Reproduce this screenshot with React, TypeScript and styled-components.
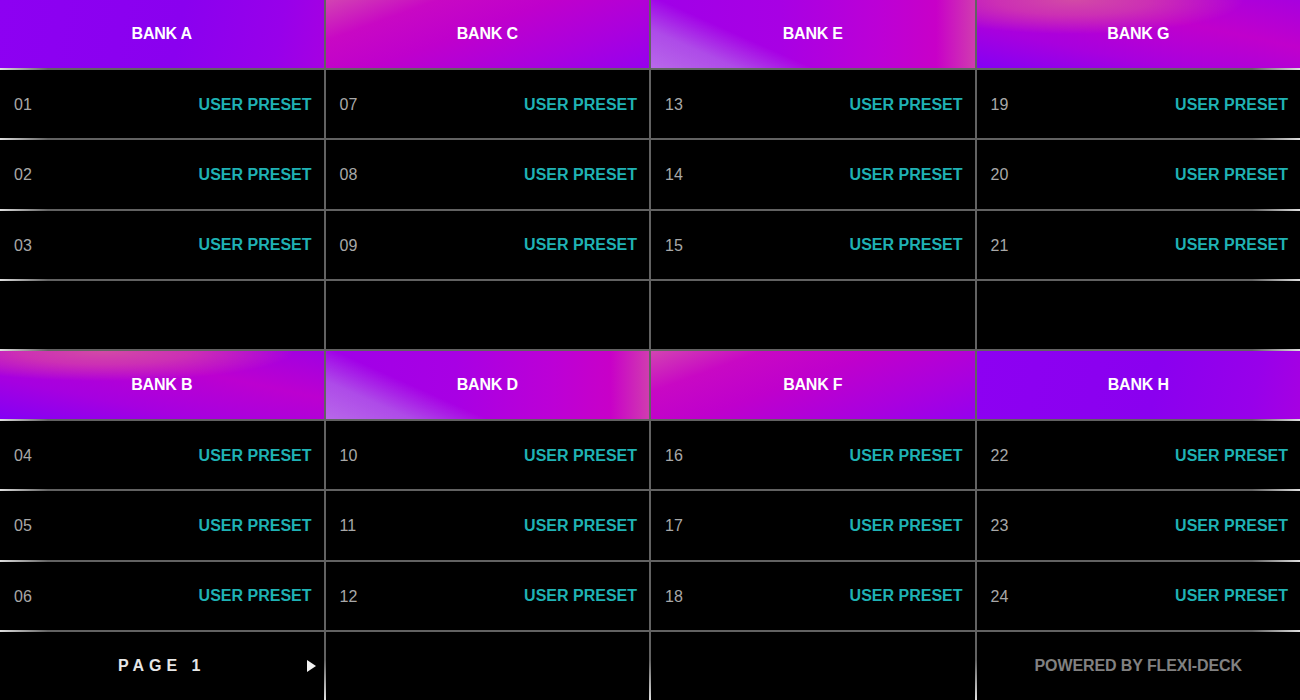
import React from "react";
import styled, { createGlobalStyle } from "styled-components";

const Global = createGlobalStyle`
  html, body { margin: 0; padding: 0; background: #000; }
  body { font-family: "Liberation Sans", Arial, sans-serif; }
  #root { width: 1300px; height: 700px; overflow: hidden; }
`;

type Tone = "violet" | "magenta" | "lavender" | "glow" | "glowLeft";

const tones: Record<Tone, string> = {
  violet:
    "linear-gradient(100deg, #8d00f2 0%, #8a00ef 55%, #9800ea 85%, #a600e2 100%)",
  magenta:
    "linear-gradient(160deg, #d244b2 0%, #c808c4 22%, #bf00cc 45%, #aa00de 75%, #9600ee 100%)",
  lavender:
    "linear-gradient(24deg, rgba(184,104,234,1) 0%, rgba(176,88,232,0.85) 18%, rgba(164,0,232,0) 34%), linear-gradient(to right, #a000e8 0%, #a800e4 40%, #bc00d6 70%, #c800c8 88%, #d03cb0 100%)",
  glow:
    "radial-gradient(ellipse 170px 34px at 30% 0%, #d24aa6 0%, #cc30b4 45%, rgba(200,0,200,0) 100%), linear-gradient(to bottom left, #a800de 0%, #c000cc 35%, #a800de 70%, #8400f4 100%)",
  glowLeft:
    "radial-gradient(ellipse 190px 30px at 32% 0%, #d24aa6 0%, #cc30b4 45%, rgba(200,0,200,0) 100%), linear-gradient(to bottom left, #a000e2 0%, #bc00d0 35%, #a600e0 70%, #8400f4 100%)",
};

const Board = styled.main`
  display: grid;
  grid-template-columns: repeat(4, 1fr);
  grid-template-rows: repeat(10, 1fr);
  gap: 2px;
  width: 1300px;
  height: 700px;
  background:
    linear-gradient(
      to right,
      rgba(255, 255, 255, 0.8) 0,
      rgba(255, 255, 255, 0) 48px,
      rgba(255, 255, 255, 0) calc(100% - 48px),
      rgba(255, 255, 255, 0.8) 100%
    ),
    linear-gradient(to bottom, rgba(255, 255, 255, 0) calc(100% - 40px), rgba(255, 255, 255, 0.8) 100%),
    #626262;
`;

const Cell = styled.div`
  background: #000;
  min-width: 0;
  min-height: 0;
`;

const Header = styled.div<{ $tone: Tone }>`
  display: flex;
  align-items: center;
  justify-content: center;
  background: ${(p) => tones[p.$tone]};
  color: #fff;
  font-weight: 700;
  font-size: 16px;
  letter-spacing: -0.2px;
`;

const Preset = styled.div`
  display: flex;
  align-items: center;
  justify-content: space-between;
  padding: 0 12px 0 14px;
  background: #000;
  font-size: 16px;
`;

const Num = styled.span`
  color: #a8a8a8;
  font-weight: 400;
  padding-top: 2px;
`;

const Label = styled.span`
  color: #1fb2b4;
  font-weight: 700;
  padding-top: 1px;
`;

const PageCell = styled.div`
  position: relative;
  display: flex;
  align-items: center;
  justify-content: center;
  background: #000;
`;

const PageText = styled.span`
  color: #e6e6e6;
  font-weight: 700;
  font-size: 16px;
  letter-spacing: 5px;
  margin-left: 0;
`;

const NextArrow = styled.svg`
  position: absolute;
  right: 8px;
  top: 50%;
  transform: translateY(-50%);
`;

const Powered = styled.div`
  display: flex;
  align-items: center;
  justify-content: center;
  background: #000;
  color: #818181;
  font-weight: 700;
  font-size: 16px;
  letter-spacing: -0.1px;
  padding-top: 1px;
`;

const topBanks: { name: string; tone: Tone }[] = [
  { name: "BANK A", tone: "violet" },
  { name: "BANK C", tone: "magenta" },
  { name: "BANK E", tone: "lavender" },
  { name: "BANK G", tone: "glow" },
];
const bottomBanks: { name: string; tone: Tone }[] = [
  { name: "BANK B", tone: "glowLeft" },
  { name: "BANK D", tone: "lavender" },
  { name: "BANK F", tone: "magenta" },
  { name: "BANK H", tone: "violet" },
];

const pad = (n: number) => String(n).padStart(2, "0");

function Block({ banks, block }: { banks: { name: string; tone: Tone }[]; block: number }) {
  return (
    <>
      {banks.map((b) => (
        <Header key={b.name} $tone={b.tone}>
          {b.name}
        </Header>
      ))}
      {[0, 1, 2].map((r) =>
        [0, 1, 2, 3].map((c) => (
          <Preset key={`${block}-${r}-${c}`}>
            <Num>{pad(6 * c + 3 * block + r + 1)}</Num>
            <Label>USER PRESET</Label>
          </Preset>
        ))
      )}
    </>
  );
}

export default function App() {
  return (
    <>
      <Global />
      <Board>
        <Block banks={topBanks} block={0} />
        {[0, 1, 2, 3].map((c) => (
          <Cell key={`empty-${c}`} />
        ))}
        <Block banks={bottomBanks} block={1} />
        <PageCell>
          <PageText>PAGE 1</PageText>
          <NextArrow width="9" height="12" viewBox="0 0 9 12">
            <polygon points="0,0 9,6 0,12" fill="#f2f2f2" />
          </NextArrow>
        </PageCell>
        <Cell />
        <Cell />
        <Powered>POWERED BY FLEXI-DECK</Powered>
      </Board>
    </>
  );
}
